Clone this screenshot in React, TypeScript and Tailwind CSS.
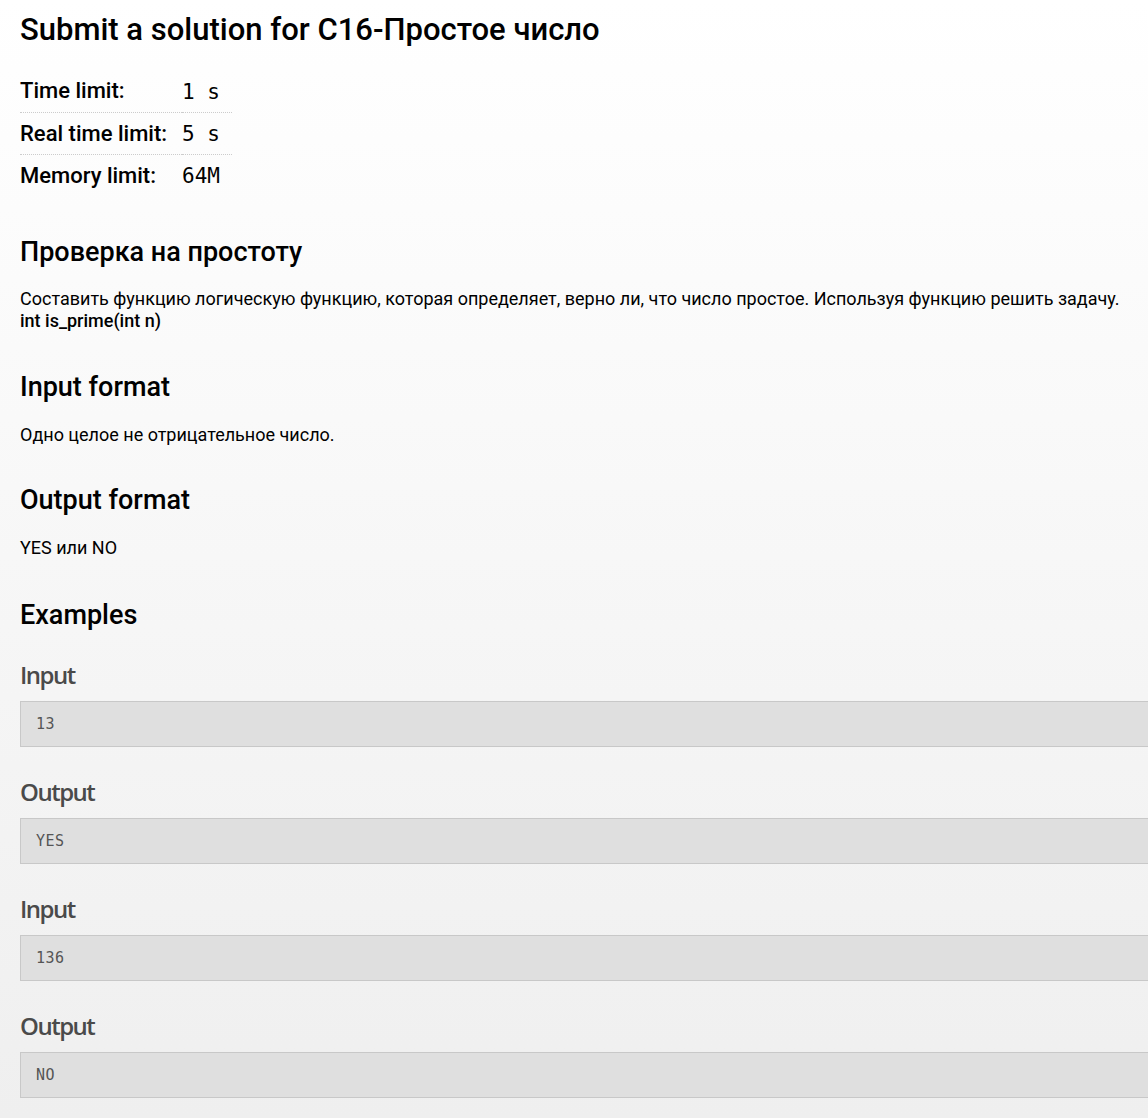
const limits = [
  { label: "Time limit:", value: "1 s" },
  { label: "Real time limit:", value: "5 s" },
  { label: "Memory limit:", value: "64M" },
]

const examples = [
  { input: "13", output: "YES" },
  { input: "136", output: "NO" },
]

const Sample = ({ title, text }: { title: string; text: string }) => (
  <div>
    <div className="h-[44px] text-[24px] leading-[36px] font-semibold text-[#4a4a4a] tracking-[-1.5px] [font-family:'Open_Sans',sans-serif]">
      {title}
    </div>
    <div className="h-[46px] border border-[#c8c8c8] bg-[#dfdfdf] pl-[15px] text-[15px] leading-[44px] tracking-[0.5px] text-[#555] [font-family:'DejaVu_Sans_Mono',monospace]">
      {text}
    </div>
  </div>
)

export default function App() {
  return (
    <div className="min-h-[1118px] w-full overflow-hidden bg-gradient-to-b from-white to-[#efefef] text-black [font-family:Roboto,sans-serif]">
      <div className="w-[1200px] pl-5 pt-[10px]">
        <h1 className="text-[31px] leading-[40px] font-medium">Submit a solution for C16-Простое число</h1>

        <table className="mt-[20px] border-collapse">
          <tbody>
            {limits.map((l, i) => (
              <tr key={l.label} className={i < limits.length - 1 ? "border-b border-dotted border-[#ccc]" : ""}>
                <td className="h-[42px] pr-[15px] text-[22px] font-medium">{l.label}</td>
                <td className="h-[42px] pr-3 pt-[3px] text-[21px] [font-family:'DejaVu_Sans_Mono',monospace]">
                  {l.value}
                </td>
              </tr>
            ))}
          </tbody>
        </table>

        <h2 className="mt-[38px] text-[27px] leading-[36px] font-medium">Проверка на простоту</h2>
        <p className="mt-[18px] text-[18px] leading-[22px]">
          Составить функцию логическую функцию, которая определяет, верно ли, что число простое. Используя функцию решить задачу.
          <br />
          <b className="font-medium">int is_prime(int n)</b>
        </p>

        <h2 className="mt-[37px] text-[27px] leading-[36px] font-medium">Input format</h2>
        <p className="mt-[19px] text-[18px] leading-[22px]">Одно целое не отрицательное число.</p>

        <h2 className="mt-[36px] text-[27px] leading-[36px] font-medium">Output format</h2>
        <p className="mt-[19px] text-[18px] leading-[22px]">YES или NO</p>

        <h2 className="mt-[38px] text-[27px] leading-[36px] font-medium">Examples</h2>

        <div className="mt-[24px] flex flex-col gap-[27px]">
          {examples.map((e, i) => (
            <div key={i} className="flex flex-col gap-[27px]">
              <Sample title="Input" text={e.input} />
              <Sample title="Output" text={e.output} />
            </div>
          ))}
        </div>
      </div>
    </div>
  )
}
